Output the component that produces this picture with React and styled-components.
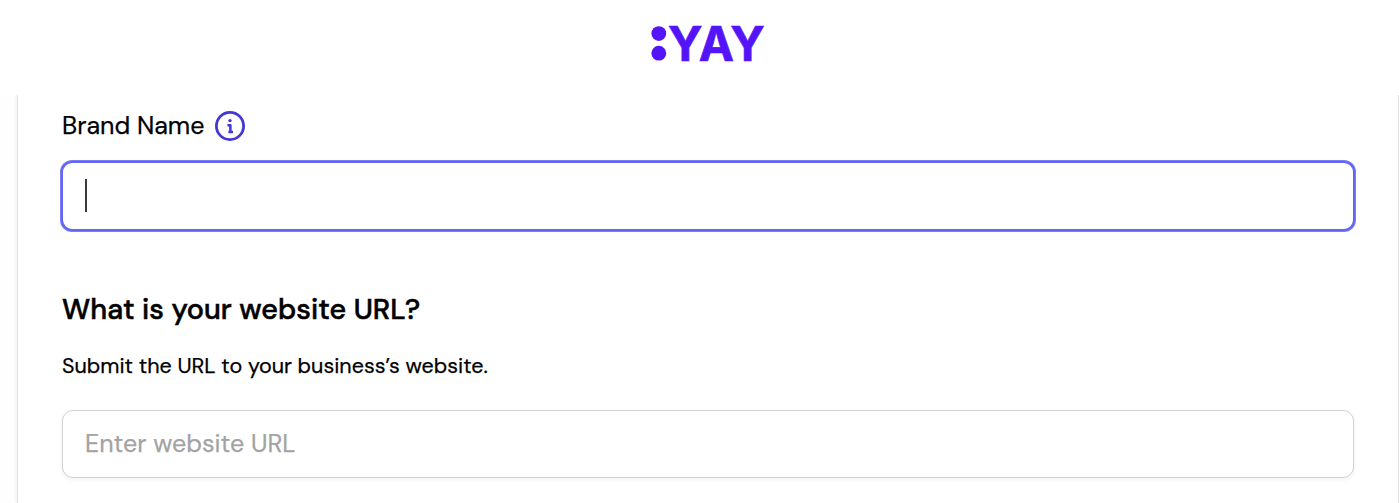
import React from 'react';
import styled, { createGlobalStyle } from 'styled-components';

const GlobalStyle = createGlobalStyle`
  *, *::before, *::after { box-sizing: border-box; }
  body {
    margin: 0;
    background: #fefefe;
    color: #000;
    font-family: "DM Sans", Inter, "Liberation Sans", sans-serif;
    overflow: hidden;
  }
`;

const Page = styled.div`
  height: 503px;
  display: flex;
  flex-direction: column;
  overflow: hidden;
`;

const Header = styled.header`
  height: 95px;
  flex: none;
  display: flex;
  justify-content: center;
  padding: 10px 0 0 16px;
  background: #fff;
`;

const Viewport = styled.main`
  flex: 1;
  min-height: 0;
  padding-left: 17px;
  overflow: hidden;
`;

const Card = styled.section`
  height: 100%;
  display: flex;
  flex-direction: column;
  padding: 0 44px;
  background: #fff;
  border: solid #e4e4e4;
  border-width: 0 1px;
  box-shadow: 0 0 4px rgba(0, 0, 0, 0.1);
`;

const Label = styled.label`
  height: 62px;
  display: flex;
  align-items: center;
  gap: 11px;
  font-size: 25.1px;
`;

const Copy = styled.span`
  display: block;
  white-space: nowrap;
  padding-bottom: ${({ $lift }) => $lift || 0}px;
  -webkit-text-stroke: 0.25px currentColor;
`;

const Field = styled.div`
  height: ${({ $focused }) => ($focused ? 70 : 68)}px;
  flex: none;
  display: flex;
  align-items: center;
  padding: 0 22px ${({ $focused }) => ($focused ? 2 : 0)}px;
  margin: ${({ $focused }) => ($focused ? '4px -1px 0' : '0')};
  border: ${({ $focused }) => ($focused ? '2px solid #6366f1' : '1px solid #d1d1d1')};
  border-radius: 11px;
  background: #fff;
  color: #a3a3a3;
  font-size: 25.1px;
  box-shadow: ${({ $focused }) =>
    $focused ? '0 0 0 1px #7b7df5' : '0 2px 4px rgba(0, 0, 0, 0.05)'};
`;

const Caret = styled.span`
  width: 2px;
  height: 33px;
  background: #3a3a3a;
`;

const Heading = styled.h2`
  margin: 60px 0 0;
  font-size: 28.7px;
  line-height: 38px;
  font-weight: 500;
  letter-spacing: 0.08px;

  ${Copy} {
    -webkit-text-stroke-width: 0.55px;
  }
`;

const Description = styled.p`
  margin: 22px 0 28px;
  font-size: 21.5px;
  line-height: 31px;
`;

function Logo() {
  return (
    <svg width="116" height="76" viewBox="0 0 116 76" fill="#5314f8" role="img">
      <circle cx="8.8" cy="23.6" r="7.4" />
      <circle cx="8.8" cy="43.2" r="7.4" />
      <text x="18" y="50.5" fontFamily="Inter, sans-serif" fontSize="47.5" fontWeight="700" stroke="#5314f8" strokeWidth="0.7" textLength="96.8" lengthAdjust="spacingAndGlyphs">YAY</text>
    </svg>
  );
}

function InfoIcon() {
  return (
    <svg width="30" height="30" viewBox="0 0 30 30" fill="none" stroke="#4338d0">
      <circle cx="15" cy="15" r="13.6" strokeWidth="2.8" />
      <circle cx="15" cy="9.6" r="1.7" fill="#4338d0" stroke="none" />
      <path d="M12.4 14.2h3v7.2M13.4 21.1h4.6" strokeWidth="2.5" strokeLinejoin="round" />
    </svg>
  );
}

export default function App() {
  return (
    <>
      <GlobalStyle />
      <Page>
        <Header><Logo /></Header>
        <Viewport>
          <Card>
            <Label><Copy $lift={2}>Brand Name</Copy><InfoIcon /></Label>
            <Field $focused><Caret /></Field>
            <Heading><Copy>What is your website URL?</Copy></Heading>
            <Description><Copy>Submit the URL to your business’s website.</Copy></Description>
            <Field><Copy $lift={2}>Enter website URL</Copy></Field>
          </Card>
        </Viewport>
      </Page>
    </>
  );
}
